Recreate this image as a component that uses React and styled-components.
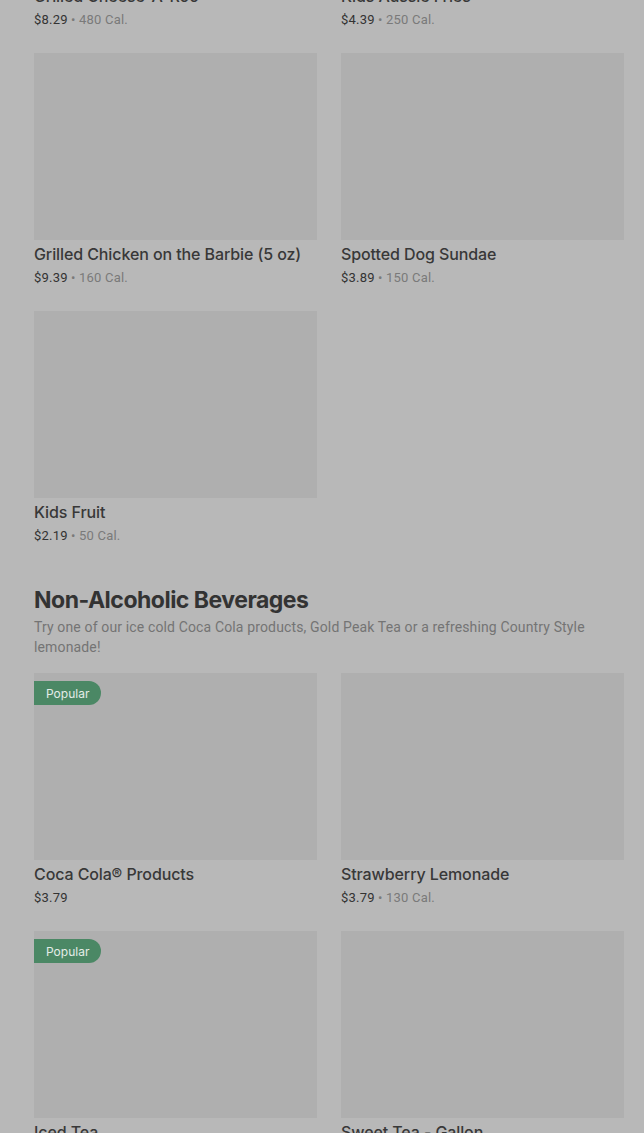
import React from 'react';
import styled, { createGlobalStyle } from 'styled-components';

const GlobalStyle = createGlobalStyle`
    * { box-sizing: border-box; }
    html, body {
        margin: 0;
        padding: 0;
        background: #b8b8b8;
        font-family: Inter, "Noto Sans", "Liberation Sans", sans-serif;
        overflow: hidden;
    }
`;

const Page = styled.div`
    padding: 0 20px 0 34px;
    margin-top: -205px;
    height: 1338px;
    overflow: hidden;
`;

const Grid = styled.div`
    display: grid;
    grid-template-columns: repeat(2, 1fr);
    column-gap: 24px;
    row-gap: 23px;
`;

const Section = styled.section`
    margin-top: 38px;
`;

const SectionTitle = styled.h2`
    margin: 0;
    font-size: 23px;
    line-height: 32px;
    font-weight: 700;
    letter-spacing: -0.5px;
    color: #333333;
`;

const SectionText = styled.p`
    margin: 1px 0 16px;
    font-family: Roboto, "Liberation Sans", sans-serif;
    font-size: 14px;
    line-height: 20px;
    letter-spacing: 0.14px;
    color: #747474;
`;

const Card = styled.div`
    display: flex;
    flex-direction: column;
`;

const Thumb = styled.div`
    position: relative;
    height: 187px;
    background: #afafaf;
`;

const Badge = styled.span`
    position: absolute;
    top: 8px;
    left: 0;
    height: 24px;
    padding: 0 12px;
    display: flex;
    align-items: center;
    background: #4b8865;
    color: #e4ece7;
    font-size: 12px;
    border-radius: 0 12px 12px 0;
`;

const Name = styled.div`
    margin-top: 4px;
    font-size: 16px;
    line-height: 20px;
    font-weight: 500;
    letter-spacing: -0.1px;
    color: #383838;
    white-space: nowrap;
`;

const Meta = styled.div`
    margin-top: 4px;
    font-family: Roboto, "Liberation Sans", sans-serif;
    font-size: 13px;
    line-height: 20px;
    letter-spacing: 0.2px;
    color: #333333;
`;

const Cal = styled.span`
    color: #7a7a7a;
`;

const Item = ({ name, price, cal, popular }) => (
    <Card>
        <Thumb>{popular && <Badge>Popular</Badge>}</Thumb>
        <Name>{name}</Name>
        <Meta>
            {price}
            {cal && <Cal> • {cal} Cal.</Cal>}
        </Meta>
    </Card>
);

const kids = [
    { name: 'Grilled Cheese-A-Roo', price: '$8.29', cal: 480 },
    { name: 'Kids Aussie Fries', price: '$4.39', cal: 250 },
    { name: 'Grilled Chicken on the Barbie (5 oz)', price: '$9.39', cal: 160 },
    { name: 'Spotted Dog Sundae', price: '$3.89', cal: 150 },
    { name: 'Kids Fruit', price: '$2.19', cal: 50 },
];

const drinks = [
    { name: 'Coca Cola® Products', price: '$3.79', popular: true },
    { name: 'Strawberry Lemonade', price: '$3.79', cal: 130 },
    { name: 'Iced Tea', price: '$3.79', popular: true },
    { name: 'Sweet Tea - Gallon', price: '$7.99' },
];

const App = () => (
    <>
        <GlobalStyle />
        <Page>
            <Grid>
                {kids.map((item) => <Item key={item.name} {...item} />)}
            </Grid>
            <Section>
                <SectionTitle>Non-Alcoholic Beverages</SectionTitle>
                <SectionText>
                    Try one of our ice cold Coca Cola products, Gold Peak Tea or a refreshing Country Style lemonade!
                </SectionText>
                <Grid>
                    {drinks.map((item) => <Item key={item.name} {...item} />)}
                </Grid>
            </Section>
        </Page>
    </>
);

export default App;
